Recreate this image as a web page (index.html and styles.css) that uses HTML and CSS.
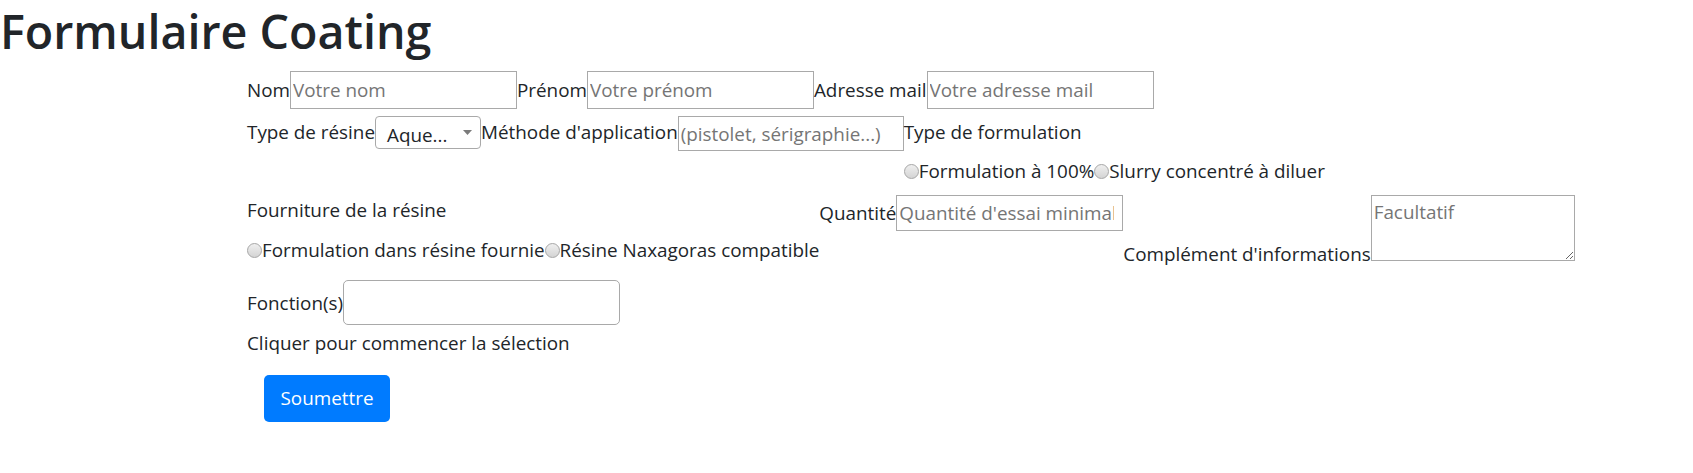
FILE: index.html
```html
<!DOCTYPE html>
<html lang="fr">
<head>
<meta charset="utf-8">
<title>Formulaire Coating</title>
<link rel="stylesheet" href="styles.css">
</head>
<body>
<h1 class="title">Formulaire Coating</h1>
<form class="form">
  <div class="row row1">
    <label class="lbl">Nom</label><input class="field" type="text" placeholder="Votre nom">
    <label class="lbl">Prénom</label><input class="field" type="text" placeholder="Votre prénom">
    <label class="lbl">Adresse mail</label><input class="field" type="text" placeholder="Votre adresse mail">
  </div>
  <div class="row row2">
    <label class="lbl lbl-tall">Type de résine</label>
    <div class="select"><span>Aque...</span><svg class="arrow" width="9" height="5" viewBox="0 0 9 5"><path d="M0 0H9L4.5 5Z" fill="#7b7b7b"/></svg></div>
    <label class="lbl lbl-tall">Méthode d'application</label>
    <input class="field f-method" type="text" placeholder="(pistolet, sérigraphie...)">
    <div class="group">
      <div class="group-title">Type de formulation</div>
      <div class="radios"><input class="radio" type="radio" name="form"><span>Formulation à 100%</span><input class="radio" type="radio" name="form"><span>Slurry concentré à diluer</span></div>
    </div>
  </div>
  <div class="row row3">
    <div class="group fourn">
      <div class="group-title gt2">Fourniture de la résine</div>
      <div class="radios r2"><input class="radio" type="radio" name="res"><span>Formulation dans résine fournie</span><input class="radio" type="radio" name="res"><span>Résine Naxagoras compatible</span></div>
    </div>
    <div class="qty">
      <label class="lbl">Quantité</label><input class="field f-qty" type="text" placeholder="Quantité d'essai minimale">
    </div>
    <div class="comp"><label class="lbl">Complément d'informations</label><textarea class="area" placeholder="Facultatif"></textarea></div>
  </div>
  <div class="row row4">
    <label class="lbl">Fonction(s)</label><input class="field f-func" type="text">
  </div>
  <div class="hint">Cliquer pour commencer la sélection</div>
  <button class="btn" type="button">Soumettre</button>
</form>
</body>
</html>
```
FILE: styles.css
```css
body {
  margin: 0;
  font-family: "Open Sans", "Noto Sans", sans-serif;
  font-size: 18.85px;
  line-height: 30px;
  color: #212529;
  background: #fff;
}
.title {
  margin: 0 0 9px 0;
  font-size: 46.6px;
  font-weight: 600;
  line-height: 62px;
}
.form {
  margin-left: 247px;
}
.row {
  display: flex;
}
.lbl {
  white-space: nowrap;
}
.field {
  box-sizing: border-box;
  width: 227px;
  height: 38px;
  margin: 0;
  padding: 1px 2px;
  border: 1px solid #a9a9a9;
  border-radius: 0;
  background: #fff;
  font: inherit;
  line-height: 30px;
  color: #212529;
  flex: none;
}
.field::placeholder,
.area::placeholder {
  color: #757575;
  opacity: 1;
}
.row1 {
  align-items: center;
  height: 38px;
}
.row2 {
  margin-top: 7px;
  align-items: flex-start;
}
.lbl-tall {
  line-height: 32px;
}
.select {
  box-sizing: border-box;
  width: 106px;
  height: 33px;
  border: 1px solid #a9a9a9;
  border-radius: 4px;
  display: flex;
  align-items: flex-start;
  justify-content: space-between;
  padding: 4px 8px 0 11px;
  line-height: 29px;
  flex: none;
  background: #fff;
}
.arrow {
  margin-top: 9px;
  flex: none;
}
.f-method {
  width: 226px;
  height: 35px;
}
.group {
  display: flex;
  flex-direction: column;
}
.group-title {
  line-height: 32px;
  margin-bottom: 9px;
}
.radios {
  display: flex;
  align-items: center;
  height: 28px;
  white-space: nowrap;
}
.radio {
  appearance: none;
  -webkit-appearance: none;
  box-sizing: border-box;
  width: 15px;
  height: 15px;
  margin: 0;
  border-radius: 50%;
  border: 1px solid #a6a6a6;
  background: linear-gradient(#efefef, #d4d4d4);
  flex: none;
}
.row3 {
  margin-top: 10px;
  align-items: flex-start;
  height: 74px;
}
.gt2 {
  line-height: 30px;
  margin-bottom: 10px;
}
.r2 {
  height: 30px;
}
.qty {
  display: flex;
  align-items: center;
}
.f-qty {
  height: 36px;
  padding-right: 8px;
}
.comp {
  line-height: 30px;
  white-space: nowrap;
}
.area {
  box-sizing: border-box;
  width: 204px;
  height: 66px;
  margin: 0;
  padding: 1px 2px;
  border: 1px solid #a9a9a9;
  font: inherit;
  line-height: 30px;
  vertical-align: baseline;
  color: #212529;
}
.row4 {
  margin-top: 11px;
  align-items: center;
}
.f-func {
  width: 277px;
  height: 45px;
  border-radius: 5px;
}
.hint {
  margin-top: 3px;
  line-height: 30px;
}
.btn {
  display: block;
  margin: 17px 0 0 17px;
  width: 126px;
  height: 47px;
  padding: 0;
  border: none;
  border-radius: 5px;
  background: #007bff;
  color: #fff;
  font: inherit;
  line-height: 47px;
  text-align: center;
}
```
